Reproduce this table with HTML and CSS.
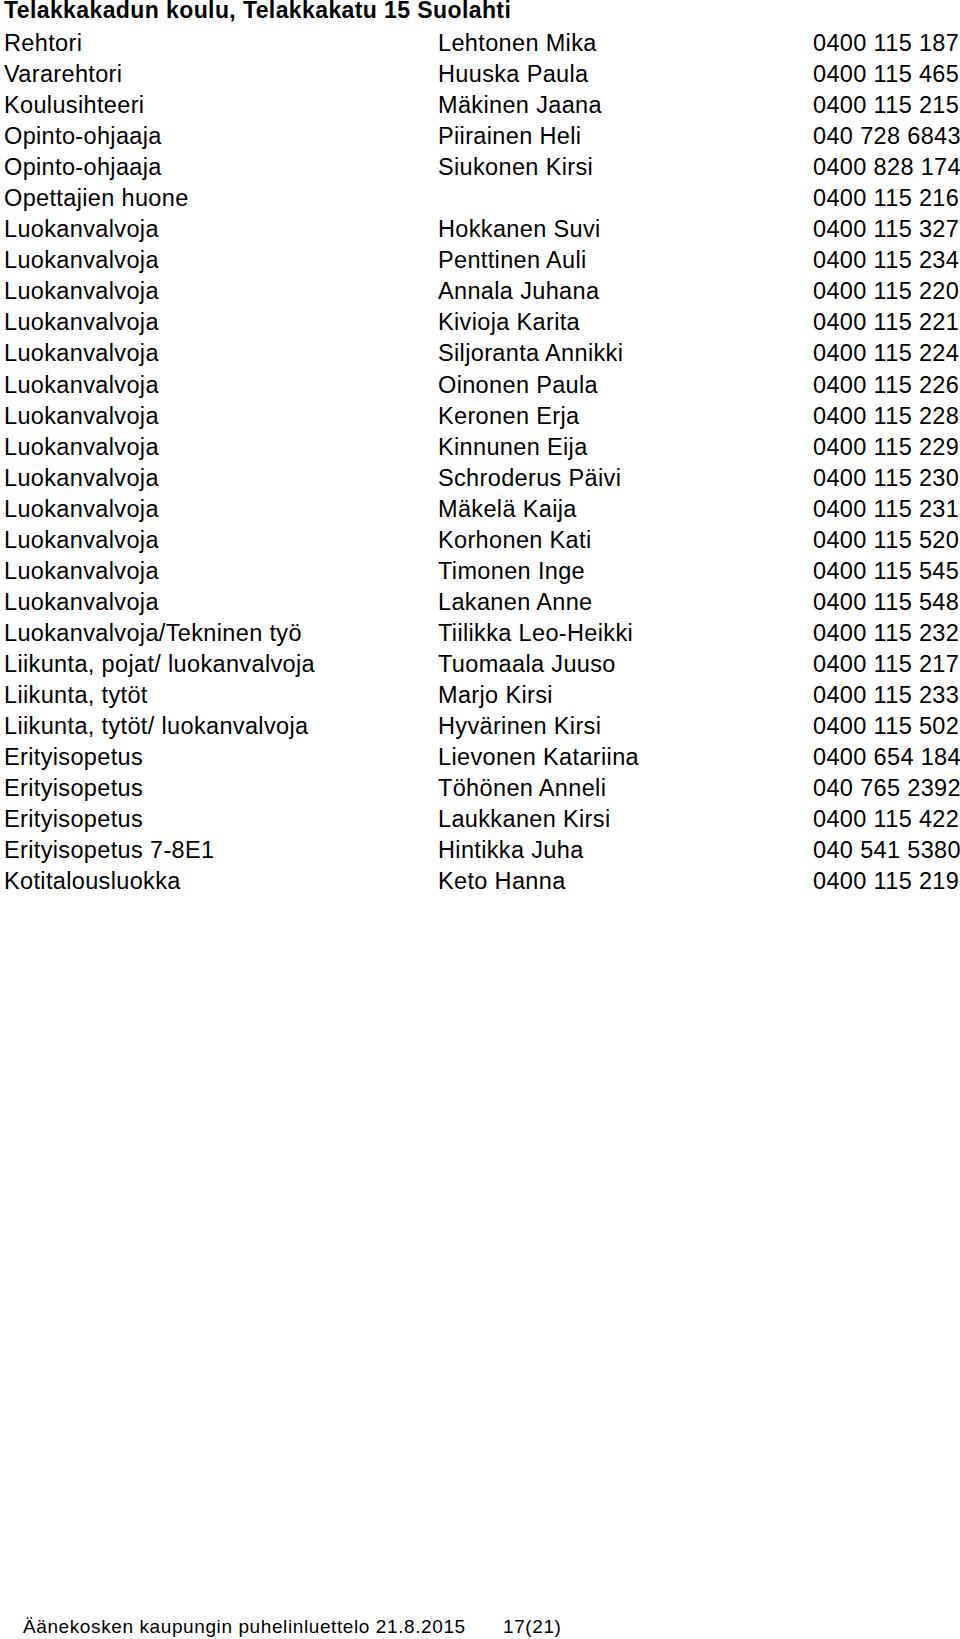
FILE: index.html
```html
<!DOCTYPE html>
<html lang="fi">
<head>
<meta charset="utf-8">
<title>Telakkakadun koulu</title>
<link rel="stylesheet" href="styles.css">
</head>
<body>
<div class="page">
  <main class="content">
    <h1 class="title">Telakkakadun koulu, Telakkakatu 15 Suolahti</h1>
    <div class="directory">
      <span>Rehtori</span><span>Lehtonen Mika</span><span>0400 115 187</span>
      <span>Vararehtori</span><span>Huuska Paula</span><span>0400 115 465</span>
      <span>Koulusihteeri</span><span>Mäkinen Jaana</span><span>0400 115 215</span>
      <span>Opinto-ohjaaja</span><span>Piirainen Heli</span><span>040 728 6843</span>
      <span>Opinto-ohjaaja</span><span>Siukonen Kirsi</span><span>0400 828 174</span>
      <span>Opettajien huone</span><span></span><span>0400 115 216</span>
      <span>Luokanvalvoja</span><span>Hokkanen Suvi</span><span>0400 115 327</span>
      <span>Luokanvalvoja</span><span>Penttinen Auli</span><span>0400 115 234</span>
      <span>Luokanvalvoja</span><span>Annala Juhana</span><span>0400 115 220</span>
      <span>Luokanvalvoja</span><span>Kivioja Karita</span><span>0400 115 221</span>
      <span>Luokanvalvoja</span><span>Siljoranta Annikki</span><span>0400 115 224</span>
      <span>Luokanvalvoja</span><span>Oinonen Paula</span><span>0400 115 226</span>
      <span>Luokanvalvoja</span><span>Keronen Erja</span><span>0400 115 228</span>
      <span>Luokanvalvoja</span><span>Kinnunen Eija</span><span>0400 115 229</span>
      <span>Luokanvalvoja</span><span>Schroderus Päivi</span><span>0400 115 230</span>
      <span>Luokanvalvoja</span><span>Mäkelä Kaija</span><span>0400 115 231</span>
      <span>Luokanvalvoja</span><span>Korhonen Kati</span><span>0400 115 520</span>
      <span>Luokanvalvoja</span><span>Timonen Inge</span><span>0400 115 545</span>
      <span>Luokanvalvoja</span><span>Lakanen Anne</span><span>0400 115 548</span>
      <span>Luokanvalvoja/Tekninen työ</span><span>Tiilikka Leo-Heikki</span><span>0400 115 232</span>
      <span>Liikunta, pojat/ luokanvalvoja</span><span>Tuomaala Juuso</span><span>0400 115 217</span>
      <span>Liikunta, tytöt</span><span>Marjo Kirsi</span><span>0400 115 233</span>
      <span>Liikunta, tytöt/ luokanvalvoja</span><span>Hyvärinen Kirsi</span><span>0400 115 502</span>
      <span>Erityisopetus</span><span>Lievonen Katariina</span><span>0400 654 184</span>
      <span>Erityisopetus</span><span>Töhönen Anneli</span><span>040 765 2392</span>
      <span>Erityisopetus</span><span>Laukkanen Kirsi</span><span>0400 115 422</span>
      <span>Erityisopetus 7-8E1</span><span>Hintikka Juha</span><span>040 541 5380</span>
      <span>Kotitalousluokka</span><span>Keto Hanna</span><span>0400 115 219</span>
    </div>
  </main>
  <footer class="footer">
    <span class="footer-title">Äänekosken kaupungin puhelinluettelo 21.8.2015</span><span class="footer-page">17(21)</span>
  </footer>
</div>
</body>
</html>
```
FILE: styles.css
```css
html, body {
  margin: 0;
  padding: 0;
  background: #ffffff;
}

body {
  font-family: "Liberation Sans", Arial, sans-serif;
  color: #000000;
}

.page {
  min-height: 100vh;
  display: flex;
  flex-direction: column;
}

.content {
  padding-left: 4px;
}

.title {
  margin: 0 0 8px 0;
  font-size: 23px;
  font-weight: bold;
  line-height: 20px;
  letter-spacing: 0.4px;
}

.directory {
  display: grid;
  grid-template-columns: 434px 375px auto;
  grid-auto-rows: 31.05px;
  font-size: 23.5px;
  line-height: 31px;
  letter-spacing: 0.35px;
  white-space: nowrap;
}

.footer {
  margin-top: auto;
  padding: 0 0 2px 23px;
  display: flex;
  font-size: 19px;
  line-height: 20px;
  letter-spacing: 0.6px;
  white-space: nowrap;
}

.footer-title {
  width: 480px;
}
```
